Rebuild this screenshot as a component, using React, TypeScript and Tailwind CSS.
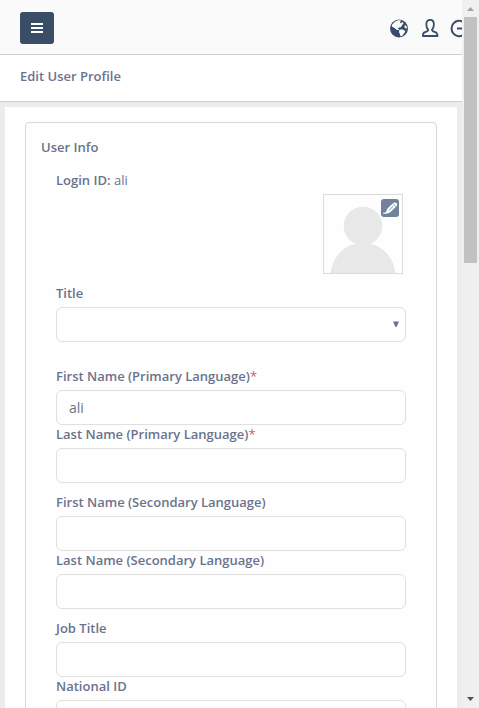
function GlobeIcon() {
  return (
    <svg className="size-[19px] shrink-0" viewBox="0 0 19 19">
      <circle cx="9" cy="9.500" r="9" fill="#364c68" />
      <path d="M2.300 5.200L5.500 2.300L8.700 1.100L11.200 1.800L9.900 3.200L10.700 4.200L12.700 3L13.600 4.600L12 6.300L10.900 8.200L8.900 8.600L7.700 9.600L9.300 10.300L8.500 11.200L6.400 10.800L4.700 9L2.900 8.200L1.700 7Z" fill="#fafafa" />
      <path d="M9.200 11L11.700 10.300L14.300 11.300L15.300 12.700L13.700 14.800L12.500 16.600L10.700 17.500L9.900 15L9 13.200Z" fill="#fafafa" />
      <path d="M14.900 6L16.500 7.200L17 9.200L15.500 9.400L14.300 8.100Z" fill="#fafafa" />
    </svg>
  );
}

function UserIcon() {
  return (
    <svg className="h-[19px] w-[17px] shrink-0" viewBox="0 0 17 19" fill="none" stroke="#364c68" strokeWidth="1.800" strokeLinejoin="round">
      <path d="M6.200 10.800C4.900 9.300 4.300 7.300 4.300 5.300C4.300 2.500 5.800 0.900 8.100 0.900S11.900 2.500 11.900 5.300C11.900 7.300 11.300 9.300 10 10.800C10 12.300 10.800 12.600 13.200 13.100C14.900 13.600 15.500 14.900 15.500 17H0.900C0.900 14.900 1.300 13.600 3 13.100C5.400 12.600 6.200 12.300 6.200 10.800Z" />
    </svg>
  );
}

function LogoutIcon() {
  return (
    <svg className="size-[19px] shrink-0" viewBox="0 0 19 19" fill="none" stroke="#364c68" strokeWidth="2">
      <path d="M13.800 3.300A7.700 7.700 0 1 0 13.800 15.700M7 9.500H18M15 6.300L18 9.500L15 12.700" />
    </svg>
  );
}

function Field({ label, value = '', required = false, className = '' }: { label: string; value?: string; required?: boolean; className?: string }) {
  return (
    <label className={`block ${className}`}>
      <span className="mb-[5px] block h-[18px] whitespace-nowrap font-semibold leading-[18px]">
        {label}
        {required && <span className="font-normal text-[#e7505a]">*</span>}
      </span>
      <input
        defaultValue={value}
        className="block h-[35px] w-full rounded-md border border-[#dfdfdf] bg-[#fefefe] px-3 text-sm text-[#6a738c] outline-none"
      />
    </label>
  );
}

function Avatar() {
  return (
    <div className="relative mr-[3px] ml-auto size-20 border border-[#dcdcdc] bg-[#fefefe]">
      <svg viewBox="0 0 78 78" className="size-full" fill="#e8e8e8">
        <circle cx="39" cy="31" r="19.3" />
        <path d="M6.500 78C9 60 22 48 39 48S69 60 71.500 78Z" />
      </svg>
      <button aria-label="Edit photo" className="absolute top-1 right-[3px] size-[18px] rounded-[3px] bg-[#71839a]">
        <svg viewBox="0 0 18 18" className="size-full" fill="none">
          <path d="M2 13.800C3.500 13.500 4.700 13.400 5.400 12.200L6.500 9.500L11.900 4.300C13 3.300 14.700 3.200 15.700 4.200C16.500 5.100 16.300 6.300 15.500 7.200L10 12.500C8.500 13.900 7 14.700 4.500 14.700H2Z" fill="white" />
          <path d="M8 11.300L12.300 7.100M12.200 5L14.800 7.500" stroke="#71839a" strokeWidth="0.900" />
        </svg>
      </button>
    </div>
  );
}

export default function App() {
  return (
    <div className="flex h-[708px] w-[479px] overflow-hidden bg-[#ececec] font-['Open_Sans',sans-serif] text-[13px] text-[#6a738c]">
      <div className="h-full w-[462px] shrink-0 overflow-hidden">
        <header className="flex h-[55px] items-center border-b border-[#cfcfcf] bg-[#fafafa] pt-0.5 pl-5">
          <button aria-label="Menu" className="flex h-8 w-[34px] flex-col items-center justify-center gap-0.5 rounded-[3px] bg-[#394d67]">
            <span className="h-0.5 w-3 bg-white" />
            <span className="h-0.5 w-3 bg-white" />
            <span className="h-0.5 w-3 bg-white" />
          </button>
          <nav className="ml-auto flex w-[72px] items-center gap-[13px] overflow-hidden">
            <GlobeIcon />
            <UserIcon />
            <div className="-ml-0.5 shrink-0"><LogoutIcon /></div>
          </nav>
        </header>
        <div className="flex h-[47px] items-center border-b border-[#cfcfcf] bg-white px-5 pb-0.5">
          <h1 className="font-semibold">Edit User Profile</h1>
        </div>
        <main className="mx-[5px] mt-[5px] bg-[#fefefe] px-5 pt-[15px]">
          <section className="h-[640px] rounded border border-[#d9d9d9] px-[30px] pt-[15px]">
            <h2 className="-ml-[15px] font-semibold leading-[18px]">User Info</h2>
            <p className="mt-[15px] leading-[18px]"><strong className="font-semibold">Login ID:</strong> ali</p>
            <div className="mt-[5px]"><Avatar /></div>
            <div className="mt-2.5">
              <div className="mb-[5px] h-[18px] font-semibold leading-[18px]">Title</div>
              <div role="combobox" aria-label="Title" className="flex h-[35px] items-center justify-end rounded-md border border-[#dfdfdf] pr-1.5 pb-0.5">
                <svg className="h-[6px] w-1.5" viewBox="0 0 6 6"><path d="M0 0.500H6L3.500 6H2.500Z" fill="#6a738c" /></svg>
              </div>
            </div>
            <Field className="mt-[25px]" label="First Name (Primary Language)" value="ali" required />
            <Field label="Last Name (Primary Language)" required />
            <Field className="mt-2.5" label="First Name (Secondary Language)" />
            <Field label="Last Name (Secondary Language)" />
            <Field className="mt-2.5" label="Job Title" />
            <Field label="National ID" />
          </section>
        </main>
      </div>
      <div className="flex h-full w-[17px] shrink-0 flex-col items-center bg-[#f0f0f0]">
        <svg className="h-[17px] w-[17px] shrink-0" viewBox="0 0 17 17"><path d="M5 11L8.500 7L12 11Z" fill="#a3a3a3" /></svg>
        <div className="h-[246px] w-[13px] bg-[#c1c1c1]" />
        <svg className="mt-auto h-[17px] w-[17px] shrink-0" viewBox="0 0 17 17"><path d="M5 6L8.500 10L12 6Z" fill="#505050" /></svg>
      </div>
    </div>
  );
}
